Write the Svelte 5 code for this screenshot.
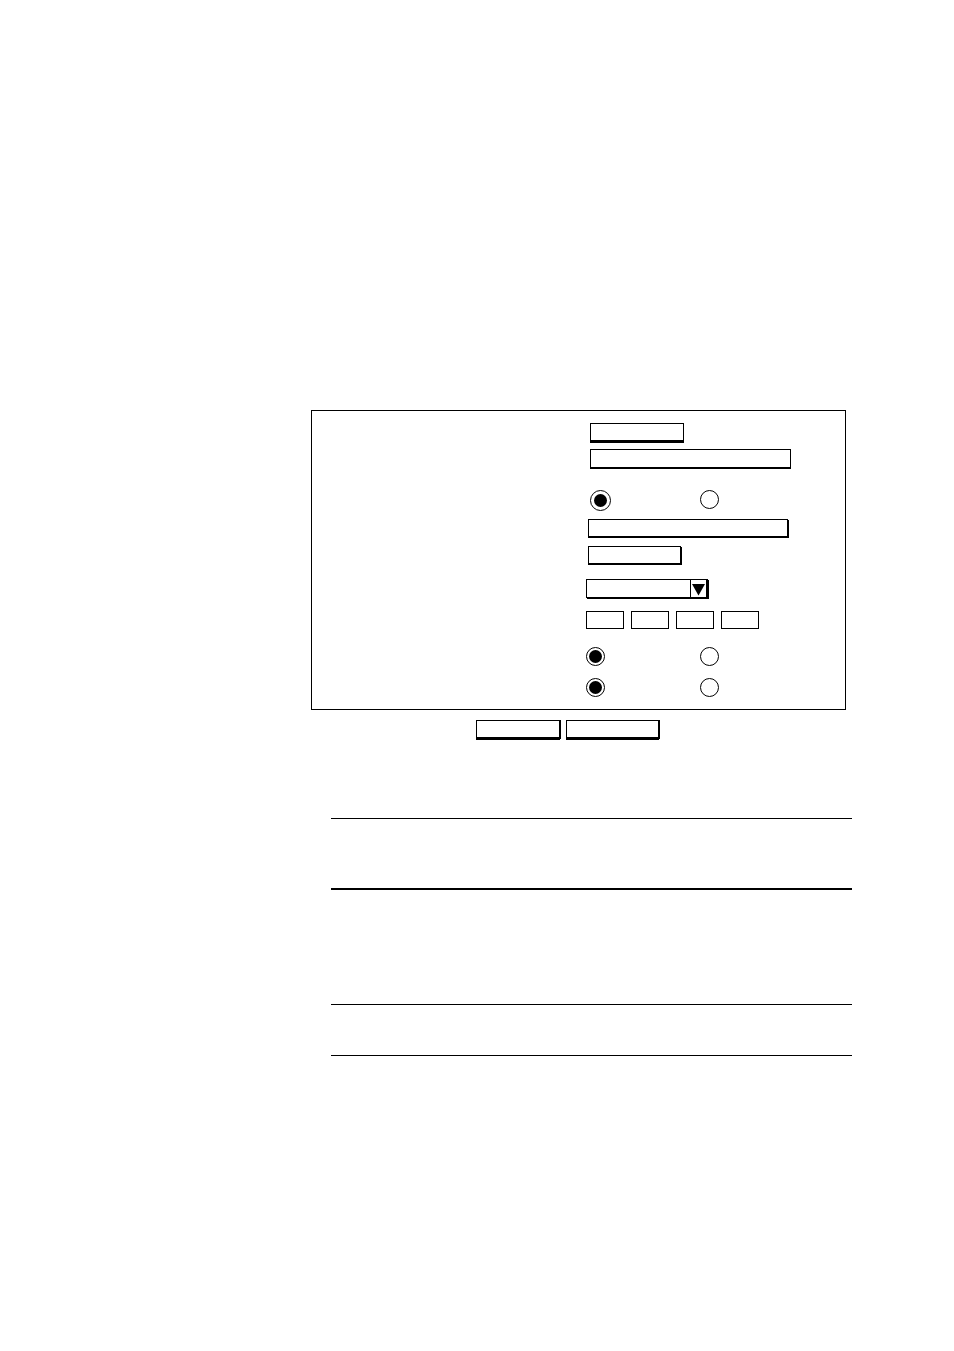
<script lang="ts">
  let first = $state('on');
  let second = $state('on');
  let third = $state('on');
  let short = $state('');
  let long = $state('');
  let longAlt = $state('');
  let shortAlt = $state('');
  let parts = $state(['', '', '', '']);
</script>

<main>
  <form onsubmit={(e) => e.preventDefault()}>
    <div class="frame">
      <div class="group top">
        <input class="field short thick" type="text" aria-label="Short value" bind:value={short} />
        <input class="field long" type="text" aria-label="Long value" bind:value={long} />
        <div class="radios large">
          <input type="radio" name="first" value="on" aria-label="On" bind:group={first} />
          <input type="radio" name="first" value="off" aria-label="Off" bind:group={first} />
        </div>
      </div>

      <div class="group middle">
        <input class="field long raised" type="text" aria-label="Second long value" bind:value={longAlt} />
        <input class="field short raised" type="text" aria-label="Second short value" bind:value={shortAlt} />
      </div>

      <div class="group bottom">
        <div class="dropdown">
          <select aria-label="Option">
            <option value=""></option>
          </select>
          <svg viewBox="0 0 15 17" width="15" height="17" aria-hidden="true">
            <path d="M1 4h13L7.500 15.500z" />
          </svg>
        </div>
        <div class="parts">
          {#each parts as _, i}
            <input type="text" aria-label={`Part ${i + 1}`} bind:value={parts[i]} />
          {/each}
        </div>
        <div class="radios">
          <input type="radio" name="second" value="on" aria-label="On" bind:group={second} />
          <input type="radio" name="second" value="off" aria-label="Off" bind:group={second} />
        </div>
        <div class="radios last">
          <input type="radio" name="third" value="on" aria-label="On" bind:group={third} />
          <input type="radio" name="third" value="off" aria-label="Off" bind:group={third} />
        </div>
      </div>
    </div>

    <div class="actions">
      <button class="save" type="submit" aria-label="Save"></button>
      <button class="reset" type="reset" aria-label="Reset"></button>
    </div>
  </form>

  <table>
    <thead>
      <tr><th></th><th></th></tr>
    </thead>
    <tbody>
      <tr class="tall"><td></td><td></td></tr>
      <tr><td></td><td></td></tr>
    </tbody>
  </table>
</main>

<style>
  :global(body) {
    margin: 0;
    background: #fff;
  }
  main {
    padding: 410px 102px 295px 311px;
    font: 12px/14px 'Liberation Sans', Arial, sans-serif;
    color: #000;
  }
  input,
  select,
  button {
    box-sizing: border-box;
    margin: 0;
    padding: 0 4px;
    font: inherit;
    color: #000;
    background: #fff;
    border: 1px solid #000;
    border-radius: 0;
    appearance: none;
  }
  .frame {
    margin-right: 6px;
    padding: 12px 0;
    border: 1px solid #000;
  }
  .group {
    display: flex;
    flex-direction: column;
    align-items: flex-start;
  }
  .top {
    gap: 6px;
    padding-left: 278px;
  }
  .middle {
    gap: 9px;
    margin-top: 8px;
    padding-left: 276px;
  }
  .bottom {
    margin-top: 15px;
    padding-left: 274px;
  }
  .field {
    height: 20px;
    border-bottom-width: 2px;
  }
  .short {
    width: 94px;
  }
  .long {
    width: 201px;
  }
  .thick {
    border-bottom-width: 3px;
  }
  .raised {
    height: 18px;
    border-bottom-width: 1px;
    box-shadow: 0 1px #000, 1px 1px #000;
  }
  .raised.short {
    width: 93px;
  }
  .raised.long {
    width: 200px;
  }
  .radios {
    display: flex;
    gap: 95px;
    margin-top: 18px;
  }
  .radios.last {
    margin-top: 12px;
  }
  .radios.large {
    gap: 89px;
    margin-top: 15px;
  }
  .radios input {
    width: 19px;
    height: 19px;
    padding: 2px;
    border-radius: 50%;
  }
  .radios input:checked {
    background: #000 content-box;
  }
  .large input:checked {
    width: 21px;
    height: 21px;
    padding: 3px;
  }
  .dropdown {
    display: flex;
    border: 1px solid #000;
    border-right-width: 2px;
    box-shadow: 1px 1px #000;
  }
  .dropdown select {
    width: 104px;
    height: 17px;
    border: 0;
    border-right: 1px solid #000;
  }
  .dropdown svg {
    display: block;
  }
  .parts {
    display: flex;
    gap: 7px;
    margin-top: 13px;
  }
  .parts input {
    width: 38px;
    height: 18px;
  }
  .actions {
    display: flex;
    gap: 6px;
    margin-top: 10px;
    padding-left: 165px;
  }
  .actions button {
    height: 19px;
    border-bottom-width: 2px;
    box-shadow: 0 1px #000, 1px 0 #000;
    cursor: pointer;
  }
  .save {
    width: 84px;
  }
  .reset {
    width: 93px;
  }
  table {
    width: calc(100% - 20px);
    margin: 79px 0 0 20px;
    border-spacing: 0;
  }
  th,
  td {
    box-sizing: border-box;
    height: 51px;
    padding: 0;
    border-bottom: 1px solid #000;
  }
  th {
    height: 72px;
    border-top: 1px solid #000;
    border-bottom-width: 2px;
  }
  .tall td {
    height: 115px;
  }
</style>
